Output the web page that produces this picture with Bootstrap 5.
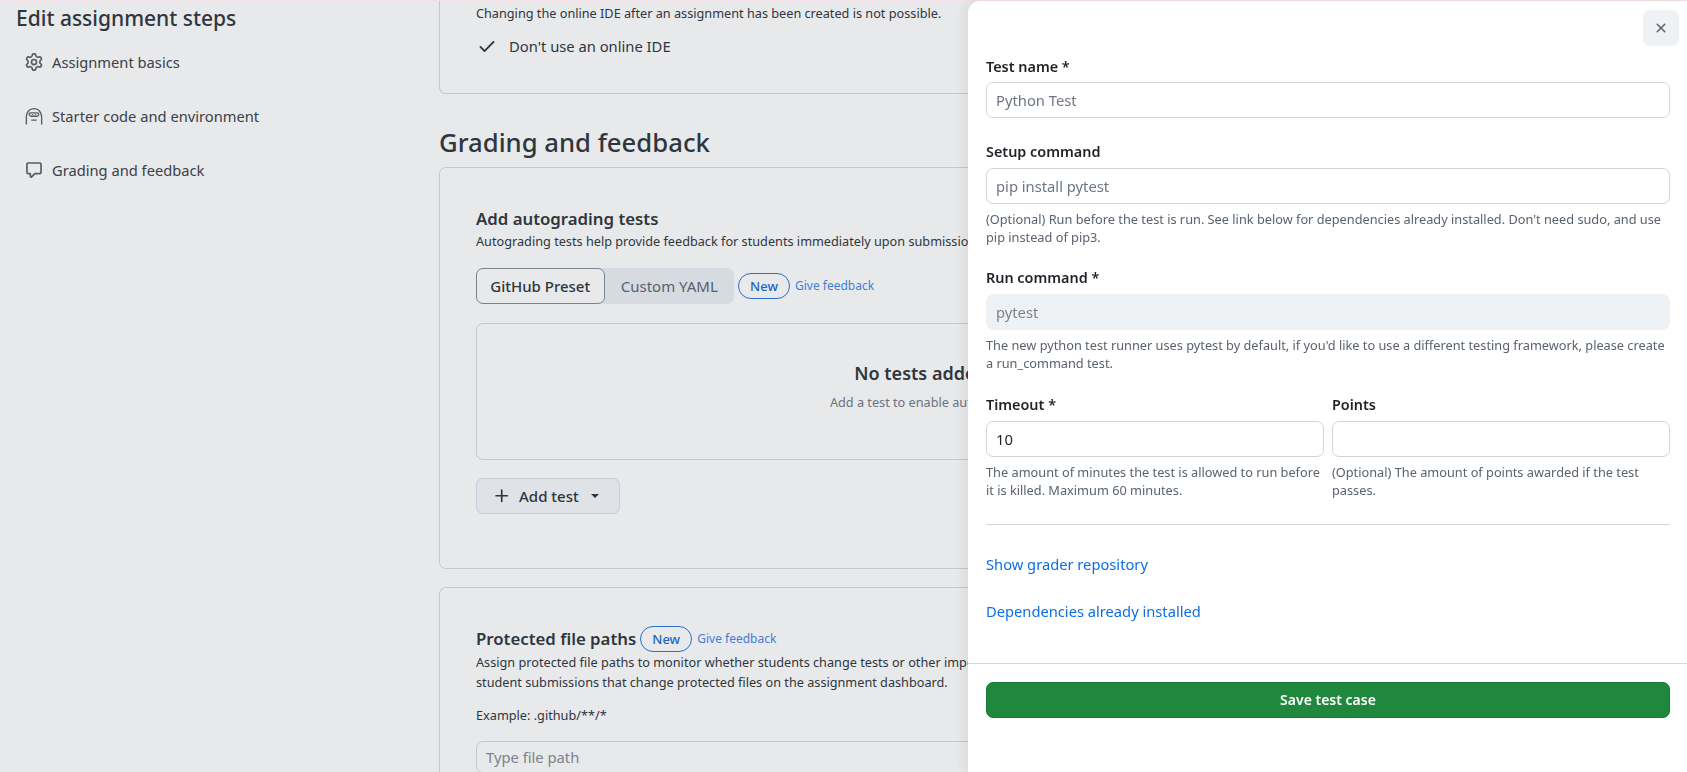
<!DOCTYPE html>
<html lang="en">
<head>
  <meta charset="UTF-8">
  <meta name="viewport" content="width=device-width, initial-scale=1.0">
  <title>Edit assignment</title>
  <link rel="stylesheet" href="https://cdn.jsdelivr.net/npm/bootstrap@5.3.0/dist/css/bootstrap.min.css">
<style>
html, body { height: 100%; overflow: hidden; }
body {
  background-color: #e8e9eb;
  color: #2f363d;
  font-family: "Noto Sans", sans-serif;
  font-size: 14px;
  border-top: 1px solid #f4e1e8;
}
.steps-side { width: 439px; flex: none; padding: 0 16px; }
.steps-title { font-size: 21px; font-weight: 500; line-height: 32px; margin: 1px 0 1px; color: #2f363d; }
.step-link { display: flex; align-items: center; gap: 9px; height: 54px; padding-left: 9px; font-size: 14.7px; color: #3a4148; }
.step-link svg { width: 18px; height: 18px; fill: #565e66; flex: none; }
.main-col { width: 962px; flex: none; }
.box-card { background: transparent; border: 1px solid #c3c8cf; border-radius: 7px; }
.ide-card { border-top: 0; border-top-left-radius: 0; border-top-right-radius: 0; height: 93px; padding: 2px 36px 0; }
.ide-opt { display: flex; align-items: center; gap: 12px; font-size: 14.75px; margin-top: 12px; padding-left: 1px; }
.ide-opt svg { width: 20px; height: 20px; fill: #2f363d; }
.sect-title { font-size: 25.7px; font-weight: 500; line-height: 36px; margin: 31px 0 6px; }
.grade-card { height: 402px; padding: 39px 36px 0; }
.path-card { height: 186px; border-bottom: 0; border-bottom-left-radius: 0; border-bottom-right-radius: 0; margin-top: 18px; padding: 38px 36px 0; overflow: hidden; }
.blk-title { font-size: 16.8px; font-weight: 600; line-height: 24px; }
.blk-desc { font-size: 12.7px; line-height: 20px; }
.seg-row { margin-top: 17px; }
.seg-group { background: #d6dae1; border-radius: 7px; height: 36px; width: 258px; }
.seg-group .seg-btn { height: 36px; border-radius: 7px; font-size: 15px; padding: 0; color: #58606a; border: 0; background: transparent; width: 130px; }
.seg-group .seg-btn.on { width: 129px; background: #e8e9eb; border: 1px solid #7b838d; color: #2f363d; font-weight: 500; }
.new-pill { border: 1px solid #2a6fcb; border-radius: 14px; color: #1a66c9; font-size: 13px; font-weight: 500; line-height: 24px; width: 52px; text-align: center; }
.fb-link { color: #3f7fd8; font-size: 12px; text-decoration: none; margin-left: 5px; }
.empty-box { height: 137px; margin-top: 19px; width: 889px; border: 1px solid #c3c8cf; border-radius: 7px; padding-top: 36px; text-align: center; }
.empty-title { font-size: 18px; font-weight: 600; line-height: 26px; }
.empty-sub { color: #6a737d; font-size: 12.7px; line-height: 20px; margin-top: 6px; padding-left: 15px; }
.add-btn { display: inline-flex; align-items: center; gap: 8px; margin-top: 18px; width: 144px; height: 36px; padding: 0 16px; border: 1px solid #c5cbd3; border-radius: 7px; background: #dfe2e7; color: #2f363d; font-size: 15px; font-weight: 500; }
.add-btn svg { width: 18px; height: 18px; fill: #2f363d; }
.caret-mark { width: 0; height: 0; border: 4.5px solid transparent; border-top-color: #2f363d; border-bottom: 0; margin-left: 4px; }
.example-line { margin-top: 13px; }
.path-input { background: transparent; border: 1px solid #c3c8cf; border-radius: 7px; height: 36px; font-size: 14.75px; padding: 0 9px; margin-top: 16px; }
.path-input::placeholder { color: #7b838d; }

.test-sheet.offcanvas { --bs-offcanvas-width: 719px; top: 1px; border-left: 0; border-top-left-radius: 12px; box-shadow: -4px 0 10px rgba(40, 45, 55, .08); color: #1f2328; }
.close-box { width: 36px; height: 36px; border: 0; border-radius: 7px; background: #eff2f5; display: flex; align-items: center; justify-content: center; padding: 0; }
.close-box svg { width: 16px; height: 16px; fill: #59636e; }
.sheet-top { height: 56px; padding: 9px 8px 0 0; }
.sheet-body { padding: 0 17px 0 18px; }
.test-sheet .form-label { font-size: 14.4px; font-weight: 600; line-height: 20px; margin-bottom: 6px; display: block; }
.test-sheet .form-label.first-label { margin-bottom: 5px; }
.test-sheet .form-control { height: 36px; border: 1px solid #d0d5dc; border-radius: 7px; font-size: 14.75px; padding: 0 9px; color: #1f2328; box-shadow: none; }
.test-sheet .form-control::placeholder { color: #6e7781; }
.test-sheet .form-control:disabled { background: #eff2f5; border-color: #eff2f5; color: #7b838d; }
.test-sheet .form-control:disabled::placeholder { color: #7b838d; }
.field-gap { margin-top: 22.5px; }
.setup-gap { margin-top: 23.5px; }
.hint-text { color: #59636e; font-size: 12.75px; line-height: 18px; margin-top: 6px; }
.sheet-link { display: block; color: #0d6fe3; font-size: 14.7px; line-height: 22px; text-decoration: none; }
.sheet-link + .sheet-link { margin-top: 25px; }
.sheet-rule { border: 0; border-top: 1px solid #d0d5dc; opacity: 1; margin: 25px 0 28px; }
.sheet-foot { border-top: 1px solid #d0d7de; padding: 18px 17px 0 18px; margin-top: 41px; }
.save-btn { --bs-btn-bg: #1f883d; --bs-btn-border-color: #1c7a37; height: 36px; border-radius: 7px; font-size: 14px; font-weight: 600; padding: 0; }
</style>
</head>
<body>

  <div class="d-flex">
    <!-- Sidebar -->
    <div class="steps-side">
      <h1 class="steps-title">Edit assignment steps</h1>
      <div>
        <div class="step-link">
          <svg viewBox="0 0 16 16"><path d="M8 0a8.2 8.2 0 0 1 .701.031C9.444.095 9.99.645 10.16 1.29l.288 1.107c.018.066.079.158.212.224.231.114.454.243.668.386.123.082.233.09.299.071l1.103-.303c.644-.176 1.392.021 1.82.63.27.385.506.792.704 1.218.315.675.111 1.422-.364 1.891l-.814.806c-.049.048-.098.147-.088.294.016.257.016.515 0 .772-.01.147.038.246.088.294l.814.806c.475.469.679 1.216.364 1.891a7.977 7.977 0 0 1-.704 1.217c-.428.61-1.176.807-1.82.63l-1.102-.302c-.067-.019-.177-.011-.3.071a5.909 5.909 0 0 1-.668.386c-.133.066-.194.158-.211.224l-.29 1.106c-.168.646-.715 1.196-1.458 1.26a8.006 8.006 0 0 1-1.402 0c-.743-.064-1.289-.614-1.458-1.26l-.289-1.106c-.018-.066-.079-.158-.212-.224a5.738 5.738 0 0 1-.668-.386c-.123-.082-.233-.09-.299-.071l-1.103.303c-.644.176-1.392-.021-1.82-.63a8.12 8.12 0 0 1-.704-1.218c-.315-.675-.111-1.422.363-1.891l.815-.806c.05-.048.098-.147.088-.294a6.214 6.214 0 0 1 0-.772c.01-.147-.038-.246-.088-.294l-.815-.806C.635 6.045.431 5.298.746 4.623a7.92 7.92 0 0 1 .704-1.217c.428-.61 1.176-.807 1.82-.63l1.102.302c.067.019.177.011.3-.071.214-.143.437-.272.668-.386.133-.066.194-.158.211-.224l.29-1.106C6.009.645 6.556.095 7.299.03 7.53.01 7.764 0 8 0Zm-.571 1.525c-.036.003-.108.036-.137.146l-.289 1.105c-.147.561-.549.967-.998 1.189-.173.086-.34.183-.5.29-.417.278-.97.423-1.529.27l-1.103-.303c-.109-.03-.175.016-.195.045-.22.312-.412.644-.573.99-.014.031-.021.11.059.19l.815.806c.411.406.562.957.53 1.456a4.709 4.709 0 0 0 0 .582c.032.499-.119 1.05-.53 1.456l-.815.806c-.081.08-.073.159-.059.19.162.346.353.677.573.989.02.03.085.076.195.046l1.102-.303c.56-.153 1.113-.008 1.53.27.161.107.328.204.501.29.447.222.85.629.997 1.189l.289 1.105c.029.109.101.143.137.146a6.6 6.6 0 0 0 1.142 0c.036-.003.108-.036.137-.146l.289-1.105c.147-.561.549-.967.998-1.189.173-.086.34-.183.5-.29.417-.278.97-.423 1.529-.27l1.103.303c.109.029.175-.016.195-.045.22-.313.411-.644.573-.99.014-.031.021-.11-.059-.19l-.815-.806c-.411-.406-.562-.957-.53-1.456a4.709 4.709 0 0 0 0-.582c-.032-.499.119-1.05.53-1.456l.815-.806c.081-.08.073-.159.059-.19a6.464 6.464 0 0 0-.573-.989c-.02-.03-.085-.076-.195-.046l-1.102.303c-.56.153-1.113.008-1.53-.27a4.44 4.44 0 0 0-.501-.29c-.447-.222-.85-.629-.997-1.189l-.289-1.105c-.029-.11-.101-.143-.137-.146a6.6 6.6 0 0 0-1.142 0ZM11 8a3 3 0 1 1-6 0 3 3 0 0 1 6 0ZM9.5 8a1.5 1.5 0 1 0-3.001.001A1.5 1.5 0 0 0 9.5 8Z"/></svg>
          Assignment basics
        </div>
        <div class="step-link">
          <svg viewBox="0 0 16 16"><path d="M.6 15.5V9.5C.6 4 3.8.8 8 .8s7.4 3.2 7.4 8.7v6h-1.2v-6C14.2 4.8 11.5 2 8 2S1.8 4.8 1.8 9.5v6Z"/><path fill-rule="evenodd" d="M5 4.6h6c1 0 1.8.8 1.8 1.7 0 1.2-.9 2.5-2 2.5H5.2c-1.1 0-2-1.3-2-2.5 0-.9.8-1.7 1.8-1.7Zm.1 1.2c-.4 0-.7.2-.7.6 0 .5.4 1.2.9 1.2h5.4c.5 0 .9-.7.9-1.2 0-.4-.3-.6-.7-.6Z"/><path d="M6 6.5h1.3v.8H6Zm2.7 0H10v.8H8.7ZM5.6 11h4.8v1.3H5.6Z"/></svg>
          Starter code and environment
        </div>
        <div class="step-link">
          <svg viewBox="0 0 16 16"><path d="M1 2.75C1 1.784 1.784 1 2.75 1h10.5c.966 0 1.75.784 1.75 1.75v7.5A1.75 1.75 0 0 1 13.25 12H9.06l-2.573 2.573A1.458 1.458 0 0 1 4 13.543V12H2.75A1.75 1.75 0 0 1 1 10.25Zm1.75-.25a.25.25 0 0 0-.25.25v7.5c0 .138.112.25.25.25h2a.75.75 0 0 1 .75.75v2.19l2.72-2.72a.749.749 0 0 1 .53-.22h4.5a.25.25 0 0 0 .25-.25v-7.5a.25.25 0 0 0-.25-.25Z"/></svg>
          Grading and feedback
        </div>
      </div>
    </div>

    <!-- Main column -->
    <div class="main-col">
      <div class="card box-card ide-card">
        <div class="blk-desc">Changing the online IDE after an assignment has been created is not possible.</div>
        <div class="ide-opt">
          <svg viewBox="0 0 16 16"><path d="M13.78 4.22a.75.75 0 0 1 0 1.06l-7.25 7.25a.75.75 0 0 1-1.06 0L2.22 9.28a.751.751 0 0 1 .018-1.042.751.751 0 0 1 1.042-.018L6 10.94l6.72-6.72a.75.75 0 0 1 1.06 0Z"/></svg>
          Don't use an online IDE
        </div>
      </div>

      <h2 class="sect-title">Grading and feedback</h2>

      <div class="card box-card grade-card">
        <div class="blk-title">Add autograding tests</div>
        <div class="blk-desc">Autograding tests help provide feedback for students immediately upon submission of their work to the assignment.</div>
        <div class="d-flex align-items-center seg-row">
          <div class="d-flex seg-group">
            <button type="button" class="btn seg-btn on">GitHub Preset</button>
            <button type="button" class="btn seg-btn">Custom YAML</button>
          </div>
          <span class="new-pill ms-1">New</span>
          <a href="#" class="fb-link">Give feedback</a>
        </div>
        <div class="empty-box">
          <div class="empty-title">No tests added</div>
          <div class="empty-sub">Add a test to enable autograding</div>
        </div>
        <div>
          <button type="button" class="add-btn">
            <svg viewBox="0 0 16 16"><path d="M7.75 2a.75.75 0 0 1 .75.75V7h4.25a.75.75 0 0 1 0 1.5H8.5v4.25a.75.75 0 0 1-1.5 0V8.5H2.75a.75.75 0 0 1 0-1.5H7V2.75A.75.75 0 0 1 7.75 2Z"/></svg>
            Add test
            <span class="caret-mark"></span>
          </button>
        </div>
      </div>

      <div class="card box-card path-card">
        <div class="d-flex align-items-center">
          <span class="blk-title">Protected file paths</span>
          <span class="new-pill ms-1">New</span>
          <a href="#" class="fb-link">Give feedback</a>
        </div>
        <div class="blk-desc">Assign protected file paths to monitor whether students change tests or other important files. You can review<br>student submissions that change protected files on the assignment dashboard.</div>
        <div class="blk-desc example-line">Example: .github/**/*</div>
        <input class="form-control path-input" type="text" placeholder="Type file path">
      </div>
    </div>
  </div>

  <!-- Test case panel -->
  <div class="offcanvas offcanvas-end show test-sheet" data-bs-backdrop="false" data-bs-scroll="true">
    <div class="sheet-top d-flex justify-content-end">
      <button type="button" class="close-box" aria-label="Close">
        <svg viewBox="0 0 16 16"><path d="M3.72 3.72a.75.75 0 0 1 1.06 0L8 6.94l3.22-3.22a.749.749 0 0 1 1.275.326.749.749 0 0 1-.215.734L9.06 8l3.22 3.22a.749.749 0 0 1-.326 1.275.749.749 0 0 1-.734-.215L8 9.06l-3.22 3.22a.751.751 0 0 1-1.042-.018.751.751 0 0 1-.018-1.042L6.94 8 3.72 4.78a.75.75 0 0 1 0-1.06Z"/></svg>
      </button>
    </div>
    <div class="sheet-body">
      <label class="form-label first-label">Test name *</label>
      <input class="form-control" type="text" placeholder="Python Test">

      <label class="form-label setup-gap">Setup command</label>
      <input class="form-control" type="text" placeholder="pip install pytest">
      <div class="hint-text">(Optional) Run before the test is run. See link below for dependencies already installed. Don't need sudo, and use pip instead of pip3.</div>

      <label class="form-label field-gap">Run command *</label>
      <input class="form-control" type="text" placeholder="pytest" disabled>
      <div class="hint-text">The new python test runner uses pytest by default, if you'd like to use a different testing framework, please create a run_command test.</div>

      <div class="row gx-2 field-gap">
        <div class="col-6">
          <label class="form-label">Timeout *</label>
          <input class="form-control" type="text" value="10">
          <div class="hint-text">The amount of minutes the test is allowed to run before it is killed. Maximum 60 minutes.</div>
        </div>
        <div class="col-6">
          <label class="form-label">Points</label>
          <input class="form-control" type="text">
          <div class="hint-text">(Optional) The amount of points awarded if the test passes.</div>
        </div>
      </div>

      <hr class="sheet-rule">
      <a href="#" class="sheet-link">Show grader repository</a>
      <a href="#" class="sheet-link">Dependencies already installed</a>
    </div>
    <div class="sheet-foot">
      <button type="button" class="btn btn-success w-100 save-btn">Save test case</button>
    </div>
  </div>

  <script src="https://cdn.jsdelivr.net/npm/bootstrap@5.3.0/dist/js/bootstrap.bundle.min.js"></script>
</body>
</html>
